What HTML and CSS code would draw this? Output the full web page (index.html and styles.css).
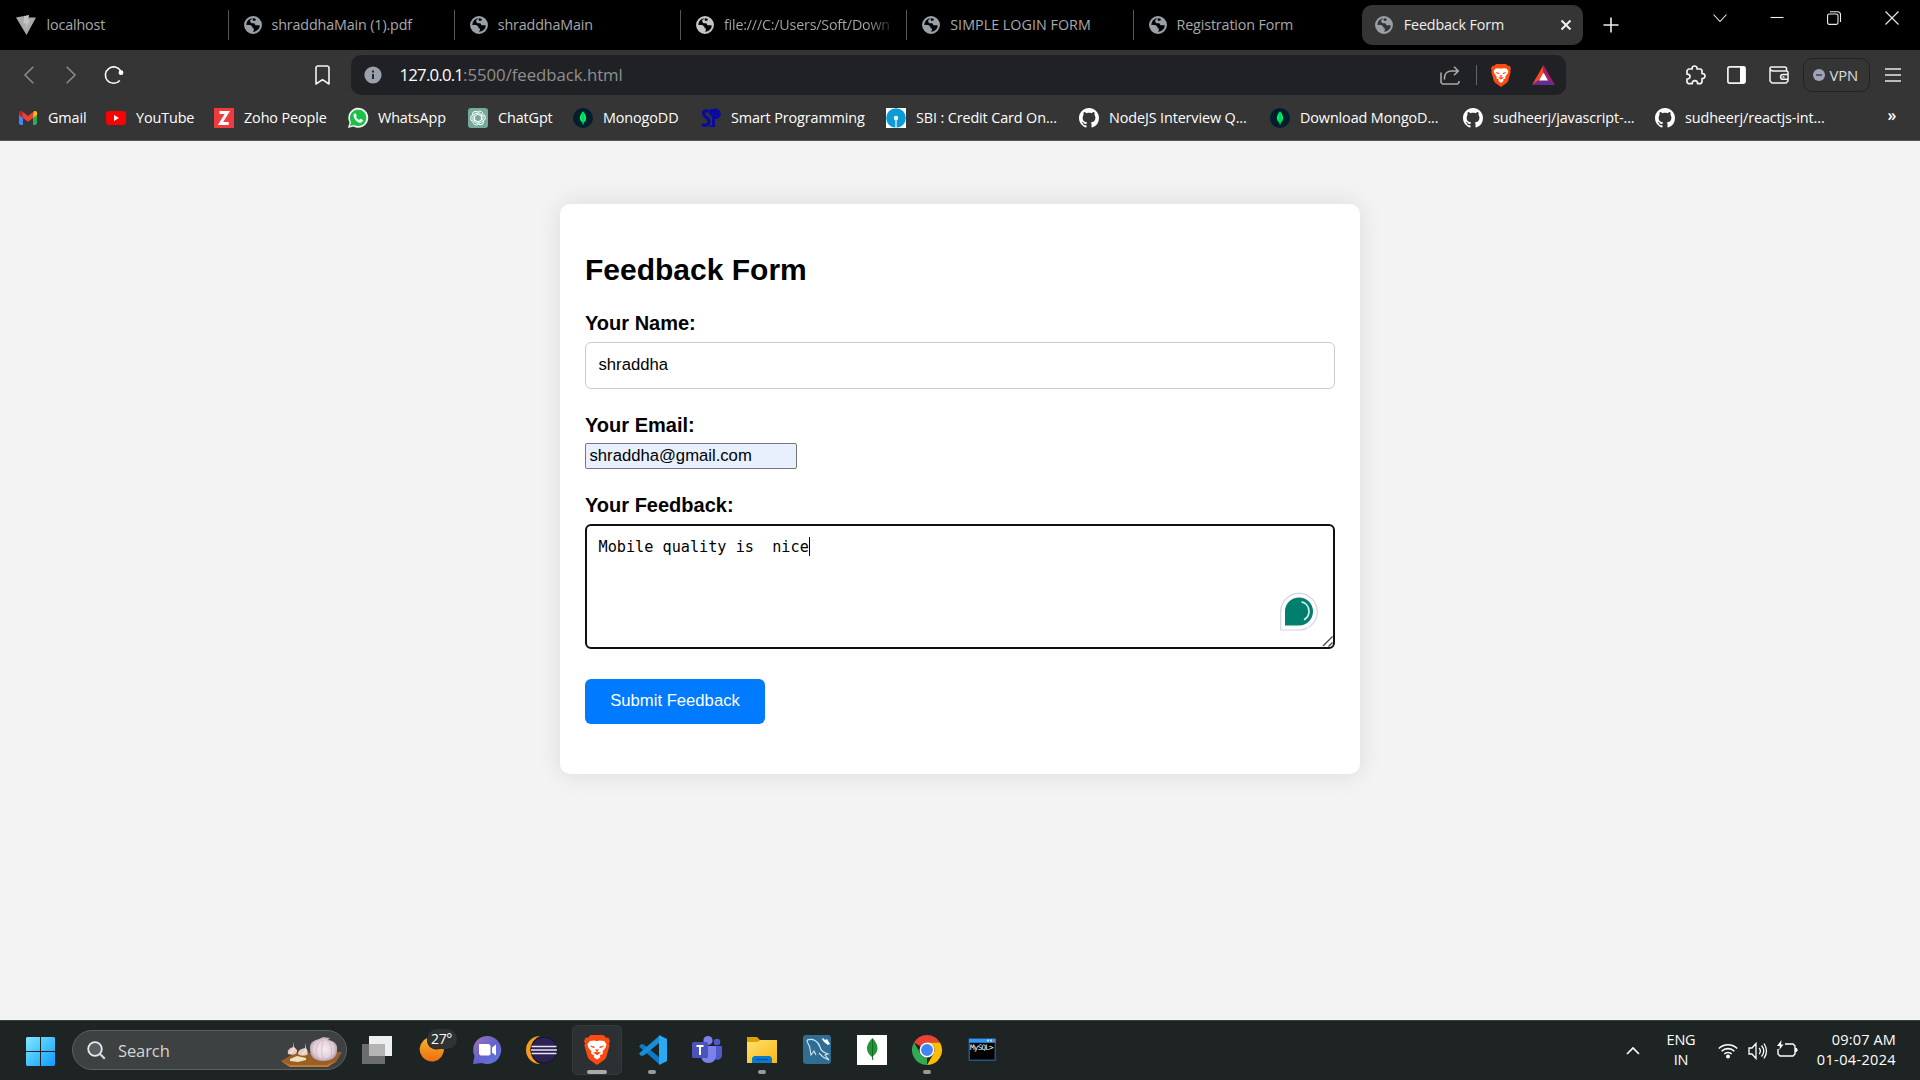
FILE: index.html
```html
<!DOCTYPE html>
<html lang="en">
<head>
<meta charset="utf-8">
<title>Feedback Form</title>
<link rel="stylesheet" href="styles.css">
</head>
<body>
<svg class="defs" aria-hidden="true">
  <defs>
    <symbol id="globe" viewBox="0 0 18 18">
      <circle cx="9" cy="9" r="7.9" fill="none" stroke="currentColor" stroke-width="2.1"/>
      <path d="M8.700 1.300 7.600 3.300 6.200 4 6.300 6 7.500 7.200 10.300 7.300 11.500 9.200 14.300 9.200 16.500 9.500 17 6 14 2.300 11.500 1.500 11.800 4.200 9.700 5 8.700 4.300ZM1 8.800 6.300 9.100 8.600 11 8.500 12.300 10 12.600 9.800 14.400 8 17 3.800 15.400 1.600 12Z" fill="currentColor"/>
    </symbol>
    <symbol id="github" viewBox="0 0 16 16">
      <path fill="#fff" d="M8 0C3.580 0 0 3.580 0 8c0 3.540 2.290 6.530 5.470 7.590.4.070.55-.17.55-.38 0-.19-.01-.82-.01-1.490-2.010.37-2.530-.49-2.690-.94-.09-.23-.48-.94-.82-1.130-.28-.15-.68-.52-.01-.53.63-.01 1.080.58 1.230.82.72 1.210 1.870.87 2.330.66.070-.52.280-.87.510-1.070-1.780-.2-3.640-.89-3.640-3.950 0-.87.310-1.590.82-2.150-.08-.2-.36-1.020.080-2.120 0 0 .67-.21 2.200.82.64-.18 1.320-.27 2-.27s1.360.09 2 .27c1.530-1.040 2.200-.82 2.200-.82.440 1.100.160 1.920.080 2.120.510.560.82 1.270.82 2.150 0 3.070-1.870 3.750-3.650 3.950.290.250.540.730.540 1.480 0 1.070-.01 1.930-.01 2.200 0 .21.150.46.550.38A8.010 8.010 0 0 0 16 8c0-4.420-3.580-8-8-8Z"/>
    </symbol>
    <symbol id="mongo" viewBox="0 0 20 20">
      <circle cx="10" cy="10" r="10" fill="#001e2b"/>
      <path d="M10 3.200C7.500 6 6.700 8.500 6.900 10.600c.2 2 1.400 3.400 2.600 4.200l.2 2h.7l.2-2c1.300-.9 2.400-2.300 2.500-4.200C13.300 8.500 12.500 6 10 3.200Z" fill="#00ed64"/>
      <path d="M10 5v11" stroke="#00a84a" stroke-width=".7"/>
    </symbol>
    <symbol id="brave" viewBox="0 0 20 23">
      <path d="M5 0h10l2 2 1.800-.2 1.200 3-.8 1.500.5 1.800-2.600 8.900-1.200 1.800L10 23l-5.900-4.200-1.200-1.800L.3 8.100l.5-1.800L0 4.800l1.200-3L3 2Z" fill="#fb4a12"/>
      <path d="M10 4.700 12 4.200 15.600 4.500 17.300 7.100 16.600 9.700 14.300 12.400 14.600 14.300 12.200 15.600 12.500 17 10 18.900 7.500 17 7.800 15.600 5.400 14.300 5.700 12.400 3.400 9.700 2.700 7.100 4.400 4.500 8 4.200Z" fill="#fff"/>
      <path d="M4.800 8.100 8.300 9 7.800 10.200 5.200 9ZM15.200 8.100 11.700 9 12.200 10.200 14.800 9ZM8.500 11.200 10 13.500 11.500 11.200M7 13.500l3-.6 3 .6-3 2Z" fill="#fb4a12"/>
    </symbol>
  </defs>
</svg>

<header class="browser">
  <div class="tabs">
    <div class="tab tab-first">
      <svg class="vite" viewBox="0 0 20 20"><path d="M0 2.500 8 1l-.3 2L13 0l-.5 2.500L20 2.500 10.500 20Z" fill="#aaa"/><path d="m8 1 5-1-1.500 5 2.500 0-4.500 9 .7-6L7.500 9Z" fill="#c4c4c4"/></svg>
      <span>localhost</span>
    </div>
    <div class="tab"><svg class="globe"><use href="#globe"/></svg><span>shraddhaMain (1).pdf</span></div>
    <div class="tab"><svg class="globe"><use href="#globe"/></svg><span>shraddhaMain</span></div>
    <div class="tab"><svg class="globe globe-light"><use href="#globe"/></svg><span class="fade">file:///C:/Users/Soft/Down</span></div>
    <div class="tab"><svg class="globe"><use href="#globe"/></svg><span class="caps">SIMPLE LOGIN FORM</span></div>
    <div class="tab tab-last"><svg class="globe"><use href="#globe"/></svg><span>Registration Form</span></div>
    <div class="tab-active"><svg class="globe"><use href="#globe"/></svg><span>Feedback Form</span>
      <svg class="close" viewBox="0 0 12 12"><path d="m1.500 1.500 9 9m0-9-9 9" stroke="#eee" stroke-width="2.100"/></svg>
    </div>
    <svg class="new-tab" viewBox="0 0 16 16"><path d="M8 .5v15M.5 8h15" stroke="#eee" stroke-width="1.600"/></svg>
    <div class="window-controls">
      <svg viewBox="0 0 14 14"><path d="m.5 3.500 6.500 7 6.500-7"/></svg>
      <svg viewBox="0 0 14 14"><path d="M.5 6.500h13"/></svg>
      <svg viewBox="0 0 14 14"><rect x=".6" y="3" width="10.400" height="10.400" rx="1.600"/><path d="M3 .7h7.500a3 3 0 0 1 3 3V11"/></svg>
      <svg viewBox="0 0 14 14"><path d="m.5.5 13 13m0-13-13 13"/></svg>
    </div>
  </div>

  <div class="toolbar">
    <svg class="back" viewBox="0 0 10 18"><path d="M9.300.7 1 9l8.300 8.300" fill="none" stroke="#8c8c8c" stroke-width="1.500"/></svg>
    <svg class="forward" viewBox="0 0 10 18"><path d="M.7.7 9 9 .7 17.300" fill="none" stroke="#8c8c8c" stroke-width="1.500"/></svg>
    <svg class="reload" viewBox="0 0 20 20"><path d="M16.700 6A8.200 8.200 0 1 0 15.800 15.500" fill="none" stroke="#fff" stroke-width="1.600"/><circle cx="17" cy="7.700" r="2.400" fill="#fff"/></svg>
    <svg class="bookmark" viewBox="0 0 15 20"><path d="M2.300 1h10.400L14 2.300V19l-6.500-4.300L1 19V2.300Z" fill="none" stroke="#f4f4f4" stroke-width="1.600" stroke-linejoin="round"/></svg>
    <div class="address">
      <svg class="info" viewBox="0 0 18 18"><circle cx="9" cy="9" r="8.600" fill="#9aa0ac"/><path d="M9 8v5M9 4.500v2" stroke="#202124" stroke-width="1.900"/></svg>
      <span class="host">127.0.0.1</span><span class="path">:5500/feedback.html</span>
      <svg class="share" viewBox="0 0 20 19"><path d="M1 6.500V16.500l1.500 1.500h15l1.500-1.500v-1.500M4.500 13.500V12c0-4.500 3-7 7-7h6M14 .8 18.300 5 14 9.200" fill="none" stroke="#a8a8a8" stroke-width="1.600"/></svg>
      <i class="separator"></i>
      <svg class="shield"><use href="#brave"/></svg>
      <svg class="rewards" viewBox="0 0 23 20"><path d="M11.500 0 0 20l11.500-7Z" fill="#ff4724"/><path d="M11.500 0 23 20l-11.500-7Z" fill="#9e1f63"/><path d="M0 20h23l-8-6H8Z" fill="#662d91"/><path d="m11.500 7.500 4.500 8H7Z" fill="#fff"/></svg>
    </div>
    <svg class="puzzle" viewBox="0 0 20 20"><path d="M1 5.500 2.500 4H6.200C5.700 2 7 1 8.500 1s3 1 2.500 3h3.700l1.300 1.300v3.300c2-.2 3 1 3 2.400s-1 2.700-3 2.500v3.700L14.700 18.600H11.500c.2-2-1-3-2.600-3s-2.800 1-2.600 3H2.400L1 17.300V14c2 .2 3-.9 3-2.400S3 9 1 9.200Z" fill="none" stroke="#f4f4f4" stroke-width="1.700" stroke-linejoin="round"/></svg>
    <svg class="panel" viewBox="0 0 19 18"><rect x=".9" y=".9" width="17.200" height="16.200" rx="1.500" fill="none" stroke="#f4f4f4" stroke-width="1.700"/><path d="M13 1h5v16h-5z" fill="#fff"/></svg>
    <svg class="wallet" viewBox="0 0 20 18"><path d="M17.500 5V2L16 1H2L1 2v13l2 2h14l2-2V6l-1-1H3.500L1.500 4M19 8.500h-5a2.400 2.400 0 0 0 0 4.800h5M13.500 11h2" fill="none" stroke="#f4f4f4" stroke-width="1.500"/></svg>
    <div class="vpn"><svg viewBox="0 0 12 12"><circle cx="6" cy="6" r="6" fill="#a0a2ba"/><path d="M3 6h6" stroke="#303030" stroke-width="1.300"/></svg><span>VPN</span></div>
    <svg class="menu" viewBox="0 0 16 14"><path d="M0 1h16M0 7h16M0 13h16" stroke="#e8e8e8" stroke-width="1.600"/></svg>
  </div>

  <nav class="bookmarks">
    <a class="bm-gmail"><svg viewBox="0 0 20 20"><path d="M1 5v10.500L2.500 17H5V9Z" fill="#4285f4"/><path d="M15 9v8h2.500l1.500-1.500V5Z" fill="#34a853"/><path d="M15 5v5l4-3V5c0-2-2-2.500-3.200-1.500Z" fill="#fbbc04"/><path d="M5 5v5L1 7V5c0-2 2-2.500 3.200-1.500Z" fill="#c5221f"/><path d="m4.500 3.700 5.500 4.200 5.500-4.200L15 10l-5 3.700L5 10Z" fill="#ea4335"/></svg><span>Gmail</span></a>
    <a class="bm-youtube"><svg viewBox="0 0 20 20"><rect y="3" width="20" height="14" rx="3.500" fill="#f00"/><path d="m8 7 5 3-5 3Z" fill="#fff"/></svg><span>YouTube</span></a>
    <a class="bm-zoho"><svg viewBox="0 0 20 20"><path d="M0 0h20v20H0z" fill="#ef3b3e"/><path d="M5.500 4.500h7.800L6.500 15.500h8.200" fill="none" stroke="#fff" stroke-width="3"/></svg><span>Zoho People</span></a>
    <a class="bm-whatsapp"><svg viewBox="0 0 20 20"><path d="M0 20 1.500 14.500A10 10 0 1 1 5.500 18.500Z" fill="#f2f2f2"/><path d="m2 18 1-4A8.200 8.200 0 1 1 6 17Z" fill="#19c145"/><path d="M5.500 6.500 7.200 5l1.600 2.600L8 9c.7 1.300 1.700 2.200 3 2.900l1.400-1.200 2.500 1.300c0 2-1.500 2.800-3 2.700-3.300-.5-6.500-4-6.400-8.200Z" fill="#fff"/></svg><span>WhatsApp</span></a>
    <a class="bm-chatgpt"><svg viewBox="0 0 20 20"><rect width="20" height="20" rx="3" fill="#74aa9c"/><g fill="none" stroke="#fff" stroke-width="1"><path id="petal" d="M10 3.500a3.300 3.300 0 0 1 5 3v4.500l-5 2.900"/><use href="#petal" transform="rotate(60 10 10)"/><use href="#petal" transform="rotate(120 10 10)"/><use href="#petal" transform="rotate(180 10 10)"/><use href="#petal" transform="rotate(240 10 10)"/><use href="#petal" transform="rotate(300 10 10)"/></g></svg><span>ChatGpt</span></a>
    <a class="bm-mongo"><svg><use href="#mongo"/></svg><span>MonogoDD</span></a>
    <a class="bm-smart"><svg viewBox="0 0 20 20"><path d="M8 4C6 2 2.500 2.500 2.500 5.500c0 4 5.500 3.500 5.500 8 0 4-4 4.500-7 3" fill="none" stroke="#0a0aa0" stroke-width="3.200"/><path d="M9 1h4l2-1 4 3 1 4-3 4h-3v8H8v-1l3-1V9L8 6Z" fill="#0a0aa0"/></svg><span>Smart Programming</span></a>
    <a class="bm-sbi"><svg viewBox="0 0 20 20"><path d="M0 0h20v20H0z" fill="#fff"/><circle cx="10" cy="10" r="9.800" fill="#0b9bd7"/><circle cx="10" cy="10" r="2.200" fill="#fff"/><path d="M10 10v10" stroke="#fff" stroke-width="1.200"/></svg><span>SBI : Credit Card On...</span></a>
    <a class="bm-node"><svg><use href="#github"/></svg><span>NodeJS Interview Q...</span></a>
    <a class="bm-download"><svg><use href="#mongo"/></svg><span>Download MongoD...</span></a>
    <a class="bm-js"><svg><use href="#github"/></svg><span>sudheerj/javascript-...</span></a>
    <a class="bm-react"><svg><use href="#github"/></svg><span>sudheerj/reactjs-int...</span></a>
    <span class="more">»</span>
  </nav>
</header>

<main class="page">
  <section class="card">
    <h2>Feedback Form</h2>
    <label>Your Name:</label>
    <div class="field name-field">shraddha</div>
    <label>Your Email:</label>
    <div class="email-field">shraddha@gmail.com</div>
    <label>Your Feedback:</label>
    <div class="field feedback-field"><span>Mobile quality is  nice</span><i class="caret"></i>
      <svg class="assistant" viewBox="0 0 38 38"><path d="M.7 37V18.500A18.300 18.300 0 1 1 19 37Z" fill="#fff" stroke="#d0d3e2" stroke-width="1.200"/><path d="M5 32.500V18.500A14 14 0 1 1 19 32.500Z" fill="#027e6f"/><path d="M21.500 8.800c4.500 1 7.500 4.900 7.500 9.700 0 3.500-2 6.500-5 8.300" fill="none" stroke="#d5efeb" stroke-width="1.700"/></svg>
      <svg class="resizer" viewBox="0 0 12 12"><path d="m1 10 9.500-9.500M6.500 10.500l4-4" stroke="#444" stroke-width="1.300"/></svg>
    </div>
    <button class="submit">Submit Feedback</button>
  </section>
</main>

<footer class="taskbar">
  <svg class="start" viewBox="0 0 29 29"><defs><linearGradient id="win" x1="0" y1="0" x2="1" y2="1" gradientUnits="objectBoundingBox"><stop stop-color="#7eeaff"/><stop offset="1" stop-color="#0d9bff"/></linearGradient></defs><path d="M1 0h13v14H0V1Zm14 0h13l1 1v13H15ZM0 15h14v14H1l-1-1Zm15 0h14v13l-1 1H15Z" fill="url(#win)"/></svg>
  <div class="search">
    <svg class="lens" viewBox="0 0 19 19"><circle cx="8" cy="8" r="6.800" fill="#5a5e60" stroke="#e6eaf0" stroke-width="1.800"/><path d="m12.800 12.800 5 5" stroke="#d4dae4" stroke-width="2.200"/></svg>
    <span>Search</span>
    <svg class="garlic" viewBox="0 0 62 31"><defs><radialGradient id="bulb"><stop stop-color="#f6ecef"/><stop offset=".7" stop-color="#e4d3dc"/><stop offset="1" stop-color="#bda4b4"/></radialGradient></defs><path d="M0 24 14 16l47-1-6 10-10 5H9Z" fill="#966027"/><path d="m0 24 9 4h37l9-4-8 6H9Z" fill="#c27a2d"/><path d="M29 12c-1-7 5-9 9-10l4-2 7 1-2 2c7 1 10 5 9 10 0 7-5 11-14 11S29 19 29 12Z" fill="url(#bulb)"/><path d="M41 3c-7 4-8 14-2 20M43 3c-3 6-3 14 0 20M46 3c6 5 6 15 1 20" fill="none" stroke="#c9b2c2" stroke-width=".8"/><path d="m12 5 1 5q4 3 3 5-2 4-9 2c-1-4 2-6 5-7ZM25 6l0 5q3 4 1 7-6 2-9-1c0-4 3-5 7-6Z" fill="#e7cdc6"/><path d="M13 11q-1 4-4 5m16-4q-1 4-4 5" fill="none" stroke="#fff0ea"/><path d="m9 22 7-3 9 2v2l-8 2-8-1Z" fill="#f0dfb8"/></svg>
  </div>
  <div class="apps">
    <div class="app"><svg viewBox="0 0 30 30"><path d="M7 1h23v20H7z" fill="#eeeff0"/><path d="M0 9h23v20H0z" fill="#6b6d6e"/><path d="M7 9h16v12H7z" fill="#b4b4b4"/></svg></div>
    <div class="app weather"><svg viewBox="0 0 30 30"><defs><linearGradient id="moon" x2="0" y2="1"><stop stop-color="#f0b429"/><stop offset="1" stop-color="#ef6d14"/></linearGradient></defs><path d="M10 3C9 12 16 17 27 13A12.200 12.200 0 1 1 10 3Z" fill="url(#moon)"/></svg><span class="temperature">27°</span></div>
    <div class="app"><svg viewBox="0 0 30 30"><defs><linearGradient id="chat" x1="0" y1="0" x2="1" y2="1"><stop stop-color="#a276b0"/><stop offset=".5" stop-color="#6462cf"/><stop offset="1" stop-color="#6378e0"/></linearGradient></defs><path d="M15 1a14 14 0 1 1-5 27L1 29l1.500-8A14 14 0 0 1 15 1Z" fill="url(#chat)"/><path d="M7 9h10l1.500 1.500v9L17 20.500H8.500L7 19Zm13 3.500 4-3v11l-4-3Z" fill="#fff"/></svg></div>
    <div class="app"><svg viewBox="0 0 30 30"><path d="M13 1A14 14 0 0 0 13 29 15 15 0 0 1 13 1Z" fill="#f49b20"/><circle cx="17" cy="15" r="13" fill="#2d2255" stroke="#16132a"/><path d="M4.500 11.500h25M4 15h26M4.500 18.500h25" stroke="#e9e5f2" stroke-width="1.700"/></svg></div>
    <div class="app app-current"><svg class="brave-app"><use href="#brave"/></svg><i></i></div>
    <div class="app"><svg viewBox="0 0 30 30"><path d="m22 1 8 3v22l-8 3L2 11.500 4.200 9l3 .8L22 22Z" fill="#0e7ac7"/><path d="M22 1 2 18.500 4.200 21l3-.8L22 8Z" fill="#168fd9"/><path d="m22 0 8 4v22l-8 4Z" fill="#2aaaf3"/></svg><i></i></div>
    <div class="app"><svg viewBox="0 0 30 30"><circle cx="16" cy="5.500" r="4.600" fill="#7b83eb"/><circle cx="25" cy="7" r="3.300" fill="#5059c9"/><path d="M19 11h11v9c0 4-4 6-8 4Z" fill="#5059c9"/><path d="M8 11h16v9c0 5-3 8-7.500 8S9 25 9 20Z" fill="#7b83eb"/><rect y="7" width="16" height="16" rx="1.500" fill="#4b53bc"/><path d="M4.500 11h7M8 11v9" stroke="#fff" stroke-width="2"/></svg></div>
    <div class="app"><svg viewBox="0 0 30 30"><defs><linearGradient id="folder" x2="1" y2="1"><stop stop-color="#ffe06c"/><stop offset="1" stop-color="#f9b915"/></linearGradient></defs><path d="M0 2h10l3 3h17v8H0Z" fill="#dda009"/><path d="M0 7h11l2-2h17v23H0Z" fill="url(#folder)"/><path d="M5 28v-5l2-2h16l2 2v5Z" fill="#087bd0"/><path d="M9 24.500h12" stroke="#064f91" stroke-width="1.200"/></svg><i></i></div>
    <div class="app"><svg viewBox="0 0 30 30"><rect x="1" width="28" height="29" rx="3" fill="#2f6d92"/><path d="M5 5c6-2 11 1 13 7 1 4 3 5 8 7l-3 1 4 5-6-3-4-4M5 5c0 4 3 5 3 9l1 6 3-4 2 4" fill="none" stroke="#d8e7ef" stroke-width="1.100"/><path d="m21 3 2 2 2-1 3 5-2 1-4-3-2-3Z" fill="#fff"/></svg></div>
    <div class="app"><svg viewBox="0 0 30 30"><path d="M0 0h30v30H0z" fill="#fff"/><path d="M15.500 3c-4 4-5.500 7-5.500 10.500s2 6.500 5 8.500c3-2 5.500-5 5.500-8.500S19 7 15.500 3Z" fill="#239535"/><path d="M15.500 4v18l.3 3" stroke="#116b22" stroke-width="1"/></svg></div>
    <div class="app"><svg viewBox="0 0 30 30"><path d="M15 0A15 15 0 0 1 28 7.500H15a7.500 7.500 0 0 0-6.500 3.800L2 7.500A15 15 0 0 1 15 0Z" fill="#e94335"/><path d="M2 7.500 8.500 18.700A7.500 7.500 0 0 0 15 22.500l0 7.500A15 15 0 0 1 2 7.500Z" fill="#34a853"/><path d="M28 7.500A15 15 0 0 1 15 30l6.500-11.300a7.500 7.500 0 0 0 0-7.500L15 7.500Z" fill="#fbbc05"/><circle cx="15" cy="15" r="6.700" fill="#4285f4" stroke="#fff" stroke-width="1.500"/></svg><i></i></div>
    <div class="app console"><svg viewBox="0 0 30 30"><rect x="1.500" y="3" width="27.500" height="23" rx="1" fill="#27508a"/><path d="M2 4h26.500v3.500H2z" fill="#2e9af1"/><path d="M20 4.500h2v2h-2zM23 4.500h2v2h-2z" fill="#b9e3ff"/><path d="M26 4.500h2v2h-2z" fill="#f35d22"/><path d="M3 8h24.500v16.500H3z" fill="#000"/></svg><span>MySQL&gt;</span></div>
  </div>
  <div class="tray">
    <svg class="expand" viewBox="0 0 14 8"><path d="m1 7 6-6 6 6" fill="none" stroke="#fff" stroke-width="1.600"/></svg>
    <div class="language"><span>ENG</span><span>IN</span></div>
    <svg class="wifi" viewBox="0 0 20 16"><g fill="none" stroke="#fff" stroke-width="1.600"><path d="M.8 5.500a13 13 0 0 1 18.400 0M3.600 8.300a9 9 0 0 1 12.800 0M6.300 11a5.200 5.200 0 0 1 7.400 0"/></g><circle cx="10" cy="13.500" r="2" fill="#fff"/></svg>
    <svg class="speaker" viewBox="0 0 20 18"><path d="M1 6h3l4-4.500v15L4 12H1ZM11.200 6q2.300 3 0 6M13.500 3.500q4.500 5.500 0 11M16 1.500q5 7.500 0 15" fill="none" stroke="#fff" stroke-width="1.300"/></svg>
    <svg class="battery" viewBox="0 0 21 18"><path d="M8 4h8l2 2v8l-2 2H3l-2-2V9" fill="none" stroke="#fff" stroke-width="1.400"/><path d="M18 8h1.500l1 1v2l-1 1H18ZM4.500 0 0 6h3L2.200 10 6.500 4.500H4Z" fill="#fff"/></svg>
    <div class="clock"><span>09:07 AM</span><span class="date">01-04-2024</span></div>
  </div>
</footer>
</body>
</html>
```
FILE: styles.css
```css
* { box-sizing: border-box; }
body {
  margin: 0;
  height: 1080px;
  overflow: hidden;
  display: flex;
  flex-direction: column;
  background: #f3f3f3;
  font-family: "Open Sans", "Noto Sans", sans-serif;
}
svg { display: block; flex: none; overflow: visible; }
.defs { position: absolute; width: 0; height: 0; }

/* Browser frame */
.browser { flex: none; height: 141px; background: #353535; border-bottom: 1px solid #555; }
.tabs { height: 50px; background: #000; display: flex; align-items: center; font-size: 14.3px; letter-spacing: -0.13px; color: #a9a9a9; white-space: nowrap; }
.tabs span { padding-bottom: 2px; }
.tab { width: 226.250px; height: 30px; padding-left: 15px; display: flex; align-items: center; border-right: 1px solid #555; }
.tab-first { width: 228.500px; padding-left: 16px; }
.tab-last { border-right: 0; }
.vite { width: 20px; height: 20px; margin-right: 10.500px; }
.globe { width: 18px; height: 18px; margin-right: 10px; color: #9aa0a8; }
.globe-light { color: #c5c5c5; }
.caps { letter-spacing: 0.03px; }
.fade { letter-spacing: -0.2px; background: linear-gradient(90deg, #a9a9a9 142px, #111 171px); -webkit-background-clip: text; background-clip: text; color: transparent; }
.tab-active { width: 221px; height: 40px; margin-left: 2.500px; padding-left: 12.500px; border-radius: 10px; background: #353535; display: flex; align-items: center; color: #eee; }
.tab-active .globe { margin-right: 11px; }
.close { width: 12px; height: 12px; margin: 0 11.500px 0 auto; }
.new-tab { width: 16px; height: 16px; margin-left: 20px; }
.window-controls { display: flex; gap: 43.300px; margin: -14px 21.500px 0 auto; }
.window-controls svg { width: 14px; height: 14px; fill: none; stroke: #eee; stroke-width: 1.100; }

.toolbar { height: 50px; display: flex; align-items: center; }
.back { width: 10px; height: 18px; margin-left: 24px; }
.forward { width: 10px; height: 18px; margin-left: 32px; }
.reload { width: 20px; height: 20px; margin-left: 28px; }
.bookmark { width: 15px; height: 20px; margin-left: 190.500px; }
.address { width: 1215px; height: 40px; margin-left: 21px; padding: 0 10.500px 0 13.500px; display: flex; align-items: center; background: #202124; border-radius: 10px; font-size: 16.800px; white-space: nowrap; }
.address span { padding-bottom: 2px; }
.info { width: 18px; height: 18px; margin-right: 17.500px; }
.host { color: #fff; letter-spacing: -0.8px; }
.path { color: #8f8f8f; letter-spacing: -0.05px; }
.share { width: 20px; height: 19px; margin-left: auto; }
.separator { width: 1px; height: 20px; margin: 0 14px 0 15.500px; background: #666; }
.shield { width: 20px; height: 23px; }
.rewards { width: 23px; height: 20px; margin-left: 21.500px; }
.puzzle { width: 20px; height: 20px; margin-left: 120px; }
.panel { width: 19px; height: 18px; margin-left: 21px; }
.wallet { width: 20px; height: 18px; margin-left: 23px; }
.vpn { width: 67px; height: 34px; margin-left: 14px; padding-left: 9px; display: flex; align-items: center; gap: 5px; border: 1px solid #222; border-radius: 9px; color: #ddd; font-size: 14.800px; letter-spacing: -0.1px; }
.vpn span { padding-bottom: 1px; }
.vpn svg { width: 12px; height: 12px; }
.menu { width: 16px; height: 14px; margin-left: 15px; }

.bookmarks { height: 36px; display: flex; align-items: center; padding-left: 18px; color: #fff; font-size: 14.4px; letter-spacing: -0.12px; white-space: nowrap; }
.bookmarks a { flex: none; display: flex; align-items: center; gap: 10px; }
.bookmarks a span { padding-bottom: 2px; }
.bookmarks a svg { width: 20px; height: 20px; }
.bm-gmail { width: 88px; }
.bm-youtube { width: 108px; }
.bm-zoho { width: 134px; }
.bm-whatsapp { width: 120px; }
.bm-chatgpt { width: 105px; }
.bm-mongo { width: 128px; }
.bm-smart { width: 185px; }
.bm-sbi { width: 193px; }
.bm-node { width: 191px; }
.bm-download { width: 193px; }
.bm-js { width: 192px; }
.bm-react { width: 232.500px; }
.more { font-weight: 600; font-size: 16px; margin-top: -6px; }

/* Feedback page */
.page { flex: 1; padding-top: 63px; }
.card { width: 800px; height: 570px; margin: 0 auto; padding: 48px 25px 0; background: #fff; border-radius: 10px; box-shadow: 0 0 25px rgba(0, 0, 0, .1); font-family: "Liberation Sans", Arial, sans-serif; color: #000; }
.card h2 { margin: 0; font-size: 30px; line-height: 36px; }
.card label { display: block; font-size: 20px; font-weight: bold; line-height: 24px; }
.card h2 + label { margin-top: 23px; }
.field { position: relative; border: 1px solid #ccc; border-radius: 6px; padding: 0 12.500px; font-size: 16.670px; }
.name-field { height: 47px; margin: 7px 0 24px; line-height: 43px; }
.email-field { width: 212px; height: 26px; margin: 6px 0 24px; padding-left: 3.500px; border: 1px solid #767676; border-radius: 2px; background: #e8f0fe; font-size: 16.670px; line-height: 23px; }
.feedback-field { height: 125px; margin-top: 7px; border: 2px solid #101010; padding: 11px 11.500px; display: flex; font-family: "DejaVu Sans Mono", monospace; font-size: 15.200px; line-height: 20px; white-space: pre; }
.caret { width: 1px; height: 19px; background: #000; }
.assistant { position: absolute; right: 15.500px; bottom: 16px; width: 38px; height: 38px; }
.resizer { position: absolute; right: -1px; bottom: -1px; width: 12px; height: 12px; }
.submit { display: block; width: 180px; height: 45px; margin-top: 30px; padding: 0 0 2px; border: 0; border-radius: 6px; background: #007bff; color: #fff; font: 16.670px "Liberation Sans", Arial, sans-serif; }

/* Taskbar */
.taskbar { flex: none; height: 60px; display: flex; align-items: center; background: #1e2424; border-top: 1px solid #3b4040; color: #fff; }
.start { width: 29px; height: 29px; margin: 1px 0 0 26px; }
.search { width: 275px; height: 40px; margin: -1px 0 0 17px; padding-left: 14px; display: flex; align-items: center; border: 1px solid #5b5f60; border-radius: 20px; background: #3d4142; color: #d5d5d5; font-size: 16.500px; letter-spacing: -0.1px; }
.lens { width: 19px; height: 19px; margin-right: 12px; }
.garlic { width: 62px; height: 31px; margin: 4px 3px 0 auto; }
.apps { display: flex; margin-left: 2.500px; }
.app { position: relative; width: 55px; height: 59px; display: flex; justify-content: center; padding-top: 14px; }
.app > svg { width: 30px; height: 30px; }
.app > i { position: absolute; left: 23.500px; top: 49px; width: 8px; height: 4px; border-radius: 2px; background: #999; }
.app:nth-child(n+6) { left: -0.500px; }
.app-current { width: 50px; height: 50px; margin: 4px 2.500px 0; padding-top: 9px; border: 1px solid #343939; border-radius: 5px; background: #2c3032; }
.app-current > .brave-app { width: 26px; height: 30px; }
.app-current > i { left: 14px; top: 44px; width: 20px; background: #aaa; }
.temperature { position: absolute; left: 22px; top: 8px; width: 30px; height: 20px; border-radius: 10px; background: #303234; text-align: center; font-size: 14px; line-height: 19px; letter-spacing: -0.3px; }
.console > span { position: absolute; left: 16px; top: 22px; font: 7.500px/10px "DejaVu Sans Mono", monospace; letter-spacing: -0.7px; }
.tray { display: flex; align-items: center; margin-left: auto; margin-right: 24px; }
.expand { width: 14px; height: 8px; }
.language { width: 40px; margin-left: 21px; text-align: center; }
.language, .clock { margin-top: -1px; font-size: 14.500px; line-height: 20px; letter-spacing: -0.25px; display: flex; flex-direction: column; }
.wifi { width: 20px; height: 16px; margin-left: 17px; }
.speaker { width: 20px; height: 18px; margin-left: 10px; }
.battery { width: 21px; height: 18px; margin: -3px 0 0 9px; }
.clock { width: 98px; text-align: right; letter-spacing: 0.15px; }
.date { letter-spacing: 0.35px; }
```
